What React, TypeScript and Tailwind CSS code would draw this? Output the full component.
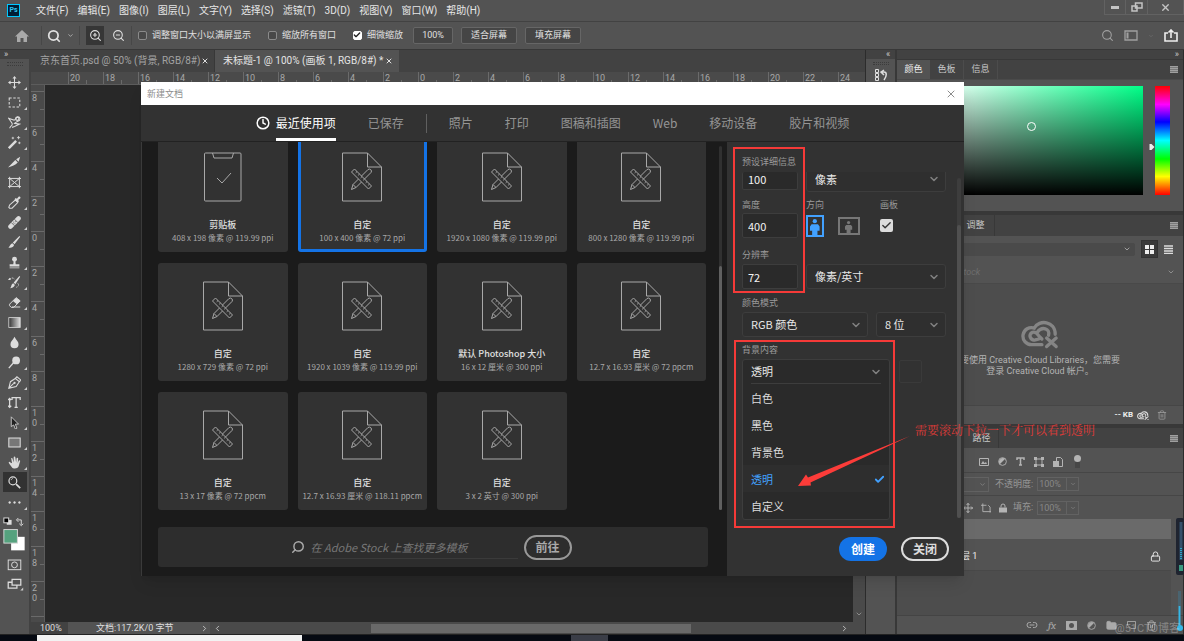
import type { ReactNode } from "react"
import clsx from "clsx"
import { ChevronDown, ChevronUp, ChevronLeft, ChevronRight, Check, X, Search, Clock, Trash2, Lock, Folder, Link2, ZoomIn, ZoomOut } from "lucide-react"

const menus = ["文件(F)", "编辑(E)", "图像(I)", "图层(L)", "文字(Y)", "选择(S)", "滤镜(T)", "3D(D)", "视图(V)", "窗口(W)", "帮助(H)"]

const rulerX = [20, 18, 16, 14, 12, 10, 8, 6, 4, 2, 0, 2, 4, 6, 8, 10, 12, 14, 16, 18, 20, 22]
const rulerY = [8, 6, 4, 2, 0, 2, 4, 6, 8, 10, 12, 14, 16, 18, 20]

const presets = [
  { title: "剪贴板", size: "408 x 198 像素 @ 119.99 ppi", clipboard: true },
  { title: "自定", size: "100 x 400 像素 @ 72 ppi", selected: true },
  { title: "自定", size: "1920 x 1080 像素 @ 119.99 ppi" },
  { title: "自定", size: "800 x 1280 像素 @ 119.99 ppi" },
  { title: "自定", size: "1280 x 729 像素 @ 72 ppi" },
  { title: "自定", size: "1920 x 1039 像素 @ 119.99 ppi" },
  { title: "默认 Photoshop 大小", size: "16 x 12 厘米 @ 300 ppi" },
  { title: "自定", size: "12.7 x 16.93 厘米 @ 72 ppcm" },
  { title: "自定", size: "13 x 17 像素 @ 72 ppcm" },
  { title: "自定", size: "12.7 x 16.93 厘米 @ 118.11 ppcm" },
  { title: "自定", size: "3 x 2 英寸 @ 300 ppi" },
]

const categories = ["照片", "打印", "图稿和插图", "Web", "移动设备", "胶片和视频"]
const backgrounds = ["白色", "黑色", "背景色", "透明", "自定义"]

const s = { fill: "none", stroke: "currentColor" }

const tools: { name: string; icon: ReactNode; plain?: boolean; active?: boolean }[] = [
  { name: "move", icon: <><path d="M8 2v12M2 8h12" {...s} strokeWidth="1.3" /><path d="M8 0 5.5 3.2h5zM8 16l2.5-3.2h-5zM0 8l3.2-2.5v5zM16 8l-3.2-2.5v5z" fill="currentColor" /></> },
  { name: "marquee", icon: <rect x="1.5" y="2.5" width="13" height="11" {...s} strokeWidth="1.3" strokeDasharray="3 2" /> },
  { name: "lasso", icon: <><path d="M2 15c2-4 4-3 3-6L1 3l6 2c2 1 2-3 5-4 3 0 4 4 1 5-2 1-3 1-5 3l6 1-6 3-3 1" {...s} strokeWidth="1.3" /><circle cx="11.5" cy="3.5" r="2" {...s} strokeWidth="1.5" /></> },
  { name: "wand", icon: <><path d="M1 15 10 6" {...s} strokeWidth="3" /><path d="M6 1v3M4.500 2.500h3M13 0v4M11 2h4M14 7v3M12.500 8.500h3" {...s} /></> },
  { name: "slice", icon: <path d="M0 14 9 5l3 3c-3 3-7 5-12 6zM10 4l5-3-2 6z" fill="currentColor" /> },
  { name: "frame", plain: true, icon: <path d="M2 1v14M14 1v14M0 3h16M0 13h16M2 3l12 10M14 3 2 13" {...s} strokeWidth="1.2" /> },
  { name: "eyedropper", icon: <><path d="m9 5 3 3-7 7H2l-1-1 1-3z" {...s} strokeWidth="1.3" /><path d="M8 4 9.500 2.500l1.500 1L13 1c2-1 3 1 2 2l-2.500 2 1 1.500L12 8z" fill="currentColor" /></> },
  { name: "heal", icon: <><path d="m3 13 10-10" {...s} strokeWidth="5.500" strokeLinecap="round" /><path d="m4 8 4 4M8 4l4 4" stroke="#535353" strokeWidth="1" /><path d="M6.500 8.500h1M8.500 7h1M8 9.500h1M7 7h.5" stroke="#535353" /></> },
  { name: "brush", icon: <path d="M15 1 8 10 6 8 14 0zM5.500 9l2 2c-1 3-4 4-7 3 2-1 2-4 5-5z" fill="currentColor" /> },
  { name: "stamp", icon: <><circle cx="8" cy="4" r="3" fill="currentColor" /><path d="M7 6h2l.5 4H14v3H2v-3h4.500zM2 14h12v1H2z" fill="currentColor" /></> },
  { name: "history", icon: <><path d="M15 1 9 10 7 8 14 0zM6.500 9l2 2c-1 3-4 4-6 4 2-1 1-5 4-6zM0 5l2-3 1.500 3z" fill="currentColor" /><path d="M2 4c2-2 5-2 6 0M12 9c2 2 1 4-2 5" {...s} strokeDasharray="2 1" /></> },
  { name: "eraser", icon: <><path d="m2 10 8-8 5 4-8 8H4l-2-2z" {...s} strokeWidth="1.2" /><path d="m6 6 4-4 5 4-4 4zM5 13h10v1.200H5z" fill="currentColor" /></> },
  { name: "gradient", icon: <><defs><linearGradient id="toolGradient"><stop stopColor="#333" /><stop offset="1" stopColor="#ddd" /></linearGradient></defs><rect x="1" y="2" width="14" height="12" fill="url(#toolGradient)" stroke="currentColor" /></> },
  { name: "blur", icon: <path d="M8 1c2 4 5 6 5 9a5 5 0 0 1-10 0c0-3 3-5 5-9z" fill="currentColor" /> },
  { name: "dodge", icon: <><circle cx="10" cy="5.500" r="4.800" fill="currentColor" /><path d="M7 8 1 15" {...s} strokeWidth="1.600" /></> },
  { name: "pen", icon: <><path d="M1 15 3 7l6-4 5 4-4 6zM9 3l2-2 5 4-2 2zM1 15l6-6" {...s} strokeWidth="1.300" /><circle cx="8" cy="8.500" r="1.400" fill="currentColor" /></> },
  { name: "type", icon: <path d="M5 5V2h10v3M10 2v12M8 14h4M2 4v9M0 5l2-2 2 2M0 12l2 2 2-2" {...s} strokeWidth="1.500" /> },
  { name: "path select", icon: <path d="m4 1 9 9H9l2 5-2 1-2-5-3 2z" fill="#222" stroke="currentColor" /> },
  { name: "rectangle", icon: <rect x="1" y="2.500" width="14" height="11" fill="#777" stroke="currentColor" strokeWidth="1.300" /> },
  { name: "hand", icon: <path d="M3 8C1 6 0 8 2 10l3 4c1 2 7 2 8-1l2-7c0-1-2-1-2 0l-1 3 .5-6c0-1-2-1-2 0L10 8 9 1.500c0-1-2-1-2 0L7 8 5.500 3c-.5-1-2-.5-1.500.5L5 9z" fill="currentColor" /> },
  { name: "zoom", active: true, plain: true, icon: <><circle cx="6" cy="6" r="4.800" {...s} strokeWidth="1.500" /><path d="m10 10 5 5" {...s} strokeWidth="2" /><path d="M4 5c0-1 1-2 2-2" {...s} /></> },
  { name: "more", icon: <path d="M2 6.500a1.500 1.500 0 1 0 .1 0zM8 6.500a1.500 1.500 0 1 0 .1 0zM14 6.500a1.500 1.500 0 1 0 .1 0z" fill="currentColor" /> },
]

function Toolbar() {
  return (
    <aside className="flex w-[31px] shrink-0 flex-col border-r-2 border-[#424242] bg-[#535353]">
      <div className="h-[9px] bg-[#424242] pl-1 text-[9px] leading-[8px] text-[#ccc]">»</div>
      <div className="mx-auto mt-[3px] mb-[6px] h-1 w-4 border-y border-dotted border-[#3c3c3c]" />
      {tools.map((tool) => (
        <button
          key={tool.name}
          aria-label={tool.name}
          className={clsx("relative mx-auto flex h-5 w-6 items-center justify-center text-[#dcdcdc]", tool.active && "bg-[#323232]")}
        >
          <svg viewBox="0 0 16 16" className="h-[13px] w-[13px]">{tool.icon}</svg>
          {!tool.plain && (
            <svg viewBox="0 0 3 3" className="absolute right-0 bottom-[2px] h-[3px] w-[3px]"><path d="M3 0v3H0z" fill="#ccc" /></svg>
          )}
        </button>
      ))}
      <svg viewBox="0 0 30 82" className="mt-[5px] w-[29px] text-[#dcdcdc]">
        <rect x="7" y="3" width="5" height="5" fill="#ddd" />
        <rect x="4" y="1" width="5" height="5" fill="#000" stroke="#ddd" />
        <path d="M18 3h4v5M19 1l-2 2 2 2M20 7l2 2 2-2" {...s} />
        <rect x="11.500" y="20.500" width="14" height="14" fill="#fff" />
        <rect x="4" y="13" width="14" height="14" fill="#55a27e" stroke="#d5d5d5" />
        <rect x="8.500" y="44.500" width="13" height="10" {...s} />
        <circle cx="15" cy="49.500" r="3" {...s} />
        <path d="M12.500 64.500h9v6h-9zM12 67.500H8.500v6h9V71" {...s} strokeWidth="1.300" />
        <path d="M24 73v3h-3z" fill="#ccc" />
      </svg>
    </aside>
  )
}

function MenuBar() {
  return (
    <header className="flex h-[22px] items-center border-b border-[#424242] pl-[7px] text-[10px] leading-none text-[#e6e6e6]">
      <span className="mr-4 flex h-[13px] w-[13px] items-center justify-center border border-[#00c8ff] bg-[#001d33] text-[7px] font-bold text-[#31c5f0]">Ps</span>
      <nav className="flex gap-[9px]">
        {menus.map((m) => <button key={m}>{m}</button>)}
      </nav>
      <div className="ml-auto flex h-full items-start text-[#c4c4c4]">
        <button aria-label="minimize" className="flex h-[15px] w-[22px] items-center justify-center border border-t-0 border-[#626262]"><span className="h-[3px] w-2 bg-[#c4c4c4]" /></button>
        <button aria-label="restore" className="flex h-[15px] w-[21px] items-center justify-center border-b border-[#626262]">
          <svg viewBox="0 0 12 10" className="w-3"><path d="M4.500 1h6.500v5H4.500zM1 4h5v5H1z" fill="#535353" stroke="currentColor" strokeWidth="1.500" /></svg>
        </button>
        <button aria-label="close" className="flex h-[15px] w-[37px] items-center justify-center border border-t-0 border-[#626262]"><X size={11} strokeWidth={3} /></button>
      </div>
    </header>
  )
}

function Tick({ label, checked }: { label: string; checked?: boolean }) {
  return (
    <label className="flex items-center gap-[5px]">
      <span className="relative flex h-[9px] w-[9px]">
        <input type="checkbox" defaultChecked={checked} className={clsx("h-[9px] w-[9px] appearance-none rounded-[2px] border", checked ? "border-white bg-white" : "border-[#8a8a8a] bg-[#484848]")} />
        {checked && <Check size={8} strokeWidth={4} className="absolute text-[#222]" />}
      </span>
      {label}
    </label>
  )
}

function OptionsBar() {
  return (
    <div className="flex h-7 items-center border-b border-[#383838] text-[9px] leading-none text-[#e0e0e0]">
      <svg viewBox="0 0 14 12" className="ml-[15px] w-[14px] text-[#a9a9a9]"><path d="M7 0 14 6.500h-2V12H8.500V8h-3v4H2V6.500H0z" fill="currentColor" /></svg>
      <div className="ml-3 flex h-[19px] items-center gap-[6px] border-x border-[#474747] px-[5px]">
        <Search size={14} strokeWidth={3} />
        <ChevronDown size={7} />
      </div>
      <button aria-label="zoom in" className="ml-[6px] flex h-[19px] w-[18px] items-center justify-center bg-[#363636]"><ZoomIn size={13} /></button>
      <button aria-label="zoom out" className="ml-[5px] flex h-[19px] w-[18px] items-center justify-center"><ZoomOut size={13} /></button>
      <div className="ml-1 flex h-[19px] items-center gap-[17px] border-l border-[#474747] pl-[6px]">
        <Tick label="调整窗口大小以满屏显示" />
        <Tick label="缩放所有窗口" />
        <Tick label="细微缩放" checked />
      </div>
      <div className="ml-[10px] flex gap-2">
        <button className="h-[17px] w-10 rounded-[2px] border border-[#666] bg-[#454545]">100%</button>
        <button className="h-[17px] w-14 rounded-[2px] border border-[#666] bg-[#454545]">适合屏幕</button>
        <button className="h-[17px] w-14 rounded-[2px] border border-[#666] bg-[#454545]">填充屏幕</button>
      </div>
      <div className="mr-[6px] ml-auto flex items-center gap-[10px] text-[#a0a0a0]">
        <Search size={13} />
        <svg viewBox="0 0 14 11" className="w-[14px]"><path d="M1 1h12v9H1z" {...s} strokeWidth="1.300" /><path d="M2.500 2.500h2v6h-2z" fill="currentColor" /></svg>
        <ChevronDown size={6} className="text-[#777]" />
        <svg viewBox="0 0 14 13" className="w-[14px] text-[#eee]"><path d="M4 4H1v8h12V4h-3M7 9V1M4.500 3.500 7 1l2.500 2.500" {...s} strokeWidth="1.600" /></svg>
      </div>
    </div>
  )
}

function DocumentArea() {
  return (
    <section className="flex min-w-0 flex-1 flex-col bg-[#282828]">
      <div className="flex h-[22px] bg-[#424242] text-[10px] leading-none">
        <div className="flex w-[184px] items-center justify-between border-r border-[#383838] pr-[7px] pl-[9px] whitespace-nowrap text-[#a2a2a2]">京东首页.psd @ 50% (背景, RGB/8#)<X size={8} strokeWidth={3} className="shrink-0 text-[#ddd]" /></div>
        <div className="flex w-[184px] items-center justify-between bg-[#535353] pr-[6px] pl-2 whitespace-nowrap text-[#e4e4e4]">未标题-1 @ 100% (画板 1, RGB/8#) *<X size={8} strokeWidth={3} className="shrink-0" /></div>
      </div>
      <div className="flex h-[13px] overflow-hidden border-b border-[#5c5c5c] bg-[#4a4a4a] text-[9px] leading-[13px] text-[#a8a8a8]">
        <div className="w-[37px] shrink-0" />
        {rulerX.map((n, i) => (
          <div key={i} className="relative w-[35px] shrink-0 border-l border-[#6a6a6a] pl-px">
            {n}<span className="absolute bottom-0 left-[17px] h-1 w-px bg-[#6a6a6a]" />
          </div>
        ))}
        <div className="w-9 shrink-0 border-l border-[#6a6a6a] pl-px">24</div>
      </div>
      <div className="flex min-h-0 flex-1">
        <div className="w-[14px] shrink-0 overflow-hidden border-r border-[#5c5c5c] bg-[#4a4a4a] pt-[6px] text-[9px] leading-[10px] text-[#a8a8a8]">
          {rulerY.map((n, i) => (
            <div key={i} className="relative h-[35px] border-t border-[#6a6a6a] pt-px pl-px">
              {String(n).split("").map((d, j) => <div key={j}>{d}</div>)}
              <span className="absolute top-[17px] right-0 h-px w-1 bg-[#6a6a6a]" />
            </div>
          ))}
          <div className="border-t border-[#6a6a6a]" />
        </div>
        <div className="flex-1" />
        <div className="flex w-3 flex-col justify-between bg-[#4a4a4a] pb-1 text-[#aaa]">
          <ChevronUp size={8} className="mx-auto" />
          <ChevronDown size={8} className="mx-auto" />
        </div>
      </div>
      <footer className="flex h-3 items-center bg-[#4a4a4a] text-[9px] leading-none text-[#dedede]">
        <span className="h-3 w-[37px] bg-[#424242] pl-[9px] leading-3">100%</span>
        <span className="flex h-3 w-[142px] items-center justify-between bg-[#535353] pr-px pl-7">文档:117.2K/0 字节<ChevronRight size={9} /></span>
        <ChevronLeft size={9} className="mr-[149px] ml-[3px]" />
        <div className="h-[9px] w-[320px] bg-[#696969]" />
        <ChevronRight size={9} className="mr-4 ml-auto" />
      </footer>
    </section>
  )
}

function MenuLines() {
  return <svg viewBox="0 0 8 7" className="mr-[5px] ml-auto w-2 text-[#a0a0a0]"><path d="M0 0h8v7H0z" fill="#7a7a7a" /><path d="M0 .5h8M0 2.500h8M0 4.500h8M0 6.500h8" {...s} /></svg>
}

function CloudLogo({ className }: { className?: string }) {
  return (
    <svg viewBox="0 0 40 30" className={className} fill="none" stroke="currentColor" strokeWidth="3.500" strokeLinecap="round">
      <path d="M22 26H11A9 9 0 1 1 14 8.500C19-1 36 1 36 15" />
      <path d="M19 20l-4 1c-5 1-8-6-3-8 3-1 5 1 7 4l3 3M17 13c5-7 14-4 12 3" />
      <path d="m27 19 10 9M37 19l-10 9" />
    </svg>
  )
}

function Panels() {
  return (
    <aside className="flex w-[319px] shrink-0 border-r border-l border-[#2c2c2c] bg-[#424242] text-[9px] leading-none text-[#c8c8c8]">
      <div className="flex w-[31px] flex-col border-r-2 border-[#383838] bg-[#535353]">
        <div className="h-[9px] bg-[#424242] pl-5 leading-[8px]">«</div>
        <div className="mx-auto mt-[3px] h-[3px] w-4 border-y border-dotted border-[#3c3c3c]" />
        <svg viewBox="0 0 14 12" className="mt-1 ml-2 w-[14px] text-[#ddd]"><path d="M1.500.5h3v3h-3zM1.500 4.500h3v3h-3zM1.500 8.500h3v3h-3z" {...s} /><path d="M8 3h2c3 0 3 4 0 8M10 1 7 3l3 3" {...s} strokeWidth="1.500" /></svg>
      </div>
      <div className="flex min-w-0 flex-1 flex-col bg-[#535353]">
        <div className="h-[9px] bg-[#424242] pr-1 text-right leading-[8px]">»</div>
        <div className="flex h-[21px] items-center border-t border-b border-t-[#383838] border-b-[#4a4a4a] bg-[#424242]">
          <span className="flex h-full w-[33px] items-center justify-center bg-[#535353] text-[#eee]">颜色</span>
          <span className="flex h-full w-[34px] items-center justify-center border-r border-[#4c4c4c]">色板</span>
          <span className="flex h-full w-[34px] items-center justify-center border-r border-[#4c4c4c]">信息</span>
          <MenuLines />
        </div>
        <div className="flex h-[131px] pt-[6px] pr-[13px]">
          <div className="relative ml-2 h-[109px] flex-1 bg-[linear-gradient(to_top,#000,transparent),linear-gradient(to_right,#fff_10%,#00ff88)]">
            <span className="absolute top-9 left-[122px] h-[9px] w-[9px] rounded-full border border-white" />
          </div>
          <svg viewBox="0 0 5 6" className="mt-[58px] ml-[6px] h-[6px] w-[6px]"><path d="M0 0h2l3 3-3 3H0z" fill="#eee" /></svg>
          <div className="h-[109px] w-[15px] bg-[linear-gradient(#f00,#f0f_17%,#00f_33%,#0ff_50%,#0f0_67%,#ff0_83%,#f00)]" />
        </div>
        <div className="flex h-[25px] items-center border-t-4 border-[#383838] bg-[#424242]">
          <span className="ml-[60px] flex h-full w-[38px] items-center justify-center border-r border-[#383838]">调整</span>
          <MenuLines />
        </div>
        <div className="flex h-[26px] items-center pr-[10px] pl-2">
          <div className="flex h-[13px] flex-1 items-center justify-end rounded-[2px] bg-[#4a4a4a] pr-1"><ChevronDown size={8} /></div>
          <span className="mx-[6px] flex h-[18px] w-[17px] items-center justify-center border border-[#333] bg-[#3a3a3a]"><svg viewBox="0 0 9 9" className="w-[9px]"><path d="M0 0h4v4H0zM5 0h4v4H5zM0 5h4v4H0zM5 5h4v4H5z" fill="#eee" /></svg></span>
          <svg viewBox="0 0 9 9" className="w-[9px]"><path d="M0 1h9M0 3.500h9M0 6h9M0 8.500h9" stroke="#ddd" strokeWidth="1.500" /></svg>
        </div>
        <div className="flex h-[22px] items-center border-b border-[#494949] pr-2 pb-[2px] pl-[34px] text-[#777]">
          <input aria-label="Adobe Stock" placeholder="Adobe Stock" className="w-24 bg-transparent italic outline-none placeholder:text-[#6e6e6e]" />
          <ChevronDown size={8} className="ml-auto text-[#aaa]" />
        </div>
        <div className="flex h-[121px] flex-col items-center bg-[#4d4d4d] pt-9 text-center leading-[11px] text-[#b4b4b4]">
          <CloudLogo className="mb-[6px] w-[38px] text-[#858585]" />
          <p>要使用 Creative Cloud Libraries，您需要<br />登录 Creative Cloud 帐户。</p>
        </div>
        <div className="flex h-[19px] items-center justify-end gap-2 border-t border-[#464646] pr-4">
          <b className="-mr-1 text-[8px] text-[#eee]">-- KB</b>
          <CloudLogo className="w-3 text-[#ddd]" />
          <Trash2 size={10} className="text-[#999]" />
        </div>
        <div className="flex h-6 items-center border-t-4 border-[#383838] bg-[#424242]">
          <span className="ml-[68px] flex h-full w-[34px] items-center justify-center border-r border-[#383838]">路径</span>
          <MenuLines />
        </div>
        <div className="flex h-[25px] items-center gap-[9px] border-b border-[#464646] pt-[3px] pl-[82px] text-[#b4b4b4]">
          <svg viewBox="0 0 10 8" className="w-[10px]"><path d="M.5.5h9v7h-9z" {...s} /><path d="M2 6l2-3 1.500 2L7 4l1 2z" fill="currentColor" /></svg>
          <svg viewBox="0 0 10 10" className="w-[9px]"><circle cx="5" cy="5" r="4.300" {...s} /><path d="M2 8 8 2a4.300 4.300 0 0 0-6 6z" fill="currentColor" /></svg>
          <svg viewBox="0 0 9 9" className="w-[9px]"><path d="M1 3V1h7v2M4.500 1v7M3 8h3" {...s} strokeWidth="1.500" /></svg>
          <svg viewBox="0 0 10 10" className="w-[10px]"><path d="M2 2h6v6H2z" {...s} /><path d="M0 0h3v3H0zM7 0h3v3H7zM0 7h3v3H0zM7 7h3v3H7z" fill="currentColor" /></svg>
          <svg viewBox="0 0 10 10" className="w-[10px]"><path d="M3.500 4V.5h4l2 2v7H6" {...s} /><path d="M0 4h6v6H0z" fill="currentColor" /></svg>
          <svg viewBox="0 0 7 13" className="ml-[2px] w-[7px]"><path d="M1 6h5v7H1z" fill="#464646" /><circle cx="3.500" cy="3.500" r="3.500" fill="currentColor" /></svg>
        </div>
        <div className="flex h-[23px] items-center border-b border-[#464646] text-[#969696]">
          <div className="flex h-[15px] w-[92px] items-center justify-end border border-[#626262] pr-[2px]"><ChevronDown size={7} /></div>
          <LayerField id="opacity" label="不透明度:" />
        </div>
        <div className="flex h-[23px] items-center pl-[66px] text-[#969696]">
          <div className="flex gap-2 text-[#b4b4b4]">
            <svg viewBox="0 0 10 10" className="w-[10px]"><path d="M5 0v10M0 5h10M3.500 2 5 .5 6.500 2M3.500 8 5 9.500 6.500 8M2 3.500.5 5 2 6.500M8 3.500 9.500 5 8 6.500" {...s} /></svg>
            <svg viewBox="0 0 11 10" className="w-[10px]"><path d="M2 0v9h9M0 2h6M8 2l2 2v6" {...s} /></svg>
            <svg viewBox="0 0 8 9" className="w-2"><path d="M0 4h8v5H0z" fill="currentColor" /><path d="M2 4V2.500a2 2 0 0 1 4 0V4" {...s} /></svg>
          </div>
          <LayerField id="fill" label="填充:" />
        </div>
        <div className="mr-3 h-5 bg-[#6a6a6a]" />
        <div className="mr-3 flex h-8 items-center border-b border-[#484848] pt-1 pl-[64px] text-[#eee]">层 1<Lock size={11} className="mr-[10px] ml-auto" /></div>
        <div className="mr-3 flex-1 bg-[#4d4d4d]" />
        <div className="flex h-[19px] items-center gap-[10px] border-t border-[#444] pl-[129px] text-[#aaa]">
          <Link2 size={12} />
          <i className="font-serif text-[11px]">fx</i>
          <svg viewBox="0 0 11 9" className="w-[11px]"><path d="M0 0h11v9H0z" fill="currentColor" /><circle cx="5.500" cy="4.500" r="2.500" fill="#535353" /></svg>
          <svg viewBox="0 0 10 10" className="w-[9px]"><circle cx="5" cy="5" r="4.300" {...s} /><path d="M2 8 8 2a4.300 4.300 0 0 0-6 6z" fill="currentColor" /></svg>
          <Folder size={11} fill="currentColor" />
          <svg viewBox="0 0 10 9" className="w-[9px]"><path d="M.5.5h9v8h-5l-4-4z" {...s} /></svg>
          <Trash2 size={11} />
        </div>
      </div>
    </aside>
  )
}

function LayerField({ id, label }: { id: string; label: string }) {
  return (
    <div className="ml-[6px] flex items-center">
      <label htmlFor={id} className="mr-1">{label}</label>
      <input id={id} defaultValue="100%" className="h-[14px] w-[30px] border border-[#626262] bg-transparent pl-px text-[9px] text-[#888]" />
      <span className="flex h-[14px] w-3 items-center justify-center border border-l-0 border-[#626262]"><ChevronDown size={6} /></span>
    </div>
  )
}

function PresetIcon({ clipboard }: { clipboard?: boolean }) {
  if (clipboard) {
    return (
      <svg viewBox="0 0 40 50" className="h-[50px] w-10 text-[#a8a8a8]" {...s}>
        <rect x="1.500" y="1" width="36.500" height="48" rx="1" />
        <path d="M9.500 1l1.500 5h18l1.500-5M14 26l5 5 9-10" />
      </svg>
    )
  }
  return (
    <svg viewBox="0 0 40 50" className="h-[50px] w-10 text-[#a8a8a8]" {...s}>
      <path d="M.5 1h25L39.500 15v34H.500zM25.500 1v14h14" />
      <path d="m9.500 37.500 1.500-5 15-15q1.500-1 2.800.2t.2 2.800l-15 15zM11 32.500l3 3" />
      <path d="m9.500 20 3-3 17 17-3 3z" fill="#323232" />
      <path d="m15 19.500-1.300 1.300M17.500 22l-1.300 1.300M20 24.500l-1.300 1.300M22.500 27l-1.300 1.300M25 29.500l-1.300 1.300M27.500 32l-1.300 1.300" />
    </svg>
  )
}

function Field({ id, label, value, className }: { id: string; label: string; value: string; className?: string }) {
  return (
    <input id={id} aria-label={label} defaultValue={value} className={clsx("w-14 rounded-[2px] border border-[#3d3d3d] bg-[#2a2a2a] pl-[5px] text-[11px] text-[#f2f2f2]", className)} />
  )
}

function Select({ label, value, className }: { label: string; value: string; className?: string }) {
  return (
    <div className={clsx("relative", className)}>
      <select aria-label={label} className="h-full w-full appearance-none rounded-[3px] border border-[#3d3d3d] bg-[#2f2f2f] pl-2 text-[11px] text-[#e8e8e8]">
        <option>{value}</option>
      </select>
      <ChevronDown size={12} strokeWidth={3} className="pointer-events-none absolute inset-y-0 right-[6px] my-auto text-[#808080]" />
    </div>
  )
}

function PersonIcon() {
  return <svg viewBox="0 0 9 15" className="h-full"><circle cx="4.500" cy="2" r="2" fill="currentColor" /><path d="M1.500 5h6L9 7v4H7v4H2v-4H0V7z" fill="currentColor" /></svg>
}

function Details() {
  return (
    <form className="relative flex w-[237px] shrink-0 flex-col bg-[#323232] pt-[13px] pr-[18px] pl-[15px] text-[9px] text-[#9a9a9a]">
      <label htmlFor="doc-width" className="h-[17px] leading-[14px]">预设详细信息</label>
      <div className="flex h-5 justify-between">
        <Field id="doc-width" label="宽度" value="100" className="h-[18px] border-t-0 pb-1" />
        <Select label="单位" value="像素" className="-mt-[6px] h-[26px] w-[140px] [clip-path:inset(6px_0_0_0)]" />
      </div>
      <div className="mt-[5px] flex h-4 items-center">
        <label htmlFor="doc-height" className="w-16">高度</label>
        <span className="w-[74px]">方向</span>
        <label htmlFor="artboard">画板</label>
      </div>
      <div className="flex h-[25px] items-center">
        <Field id="doc-height" label="高度" value="400" className="h-[25px]" />
        <button type="button" aria-label="portrait" className="ml-2 flex h-[22px] w-[18px] justify-center border-2 border-[#42a1ff] pt-[2px] text-[#42a1ff]"><PersonIcon /></button>
        <button type="button" aria-label="landscape" className="ml-[14px] flex h-[18px] w-[22px] justify-center border-2 border-[#777] pt-[2px] text-[#777]"><PersonIcon /></button>
        <span className="relative ml-5 h-[13px] w-[13px]">
          <input id="artboard" type="checkbox" defaultChecked className="block h-[13px] w-[13px] appearance-none rounded-[2px] bg-[#dcdcdc]" />
          <Check size={11} strokeWidth={3} className="pointer-events-none absolute top-px left-px text-[#333]" />
        </span>
      </div>
      <label htmlFor="doc-resolution" className="mt-2 h-[18px] leading-[18px]">分辨率</label>
      <div className="flex h-[25px] justify-between">
        <Field id="doc-resolution" label="分辨率" value="72" className="h-[25px]" />
        <Select label="分辨率单位" value="像素/英寸" className="w-[140px]" />
      </div>
      <span className="mt-[6px] h-[17px] leading-[15px]">颜色模式</span>
      <div className="flex h-[25px] justify-between">
        <Select label="颜色模式" value="RGB 颜色" className="w-[126px]" />
        <Select label="位深度" value="8 位" className="w-[70px]" />
      </div>
      <span className="mt-[5px] h-[17px] leading-[16px]">背景内容</span>
      <div className="flex gap-[9px]">
        <div className="w-[148px] rounded-[3px] border border-[#3d3d3d] bg-[#2a2a2a] text-[11px] leading-none text-[#dcdcdc]">
          <div className="relative mx-2 h-6 border-b border-[#3d3d3d]">
            <select aria-label="背景内容" className="h-full w-full appearance-none bg-transparent text-[#e8e8e8]"><option>透明</option></select>
            <ChevronDown size={12} strokeWidth={3} className="pointer-events-none absolute top-[6px] -right-px text-[#808080]" />
          </div>
          <ul role="listbox" aria-label="背景内容">
            {backgrounds.map((b) => (
              <li key={b} role="option" aria-selected={b === "透明"} className={clsx("flex h-[27px] items-center justify-between px-2 pt-px", b === "透明" && "bg-[#2e2e2e] text-[#42a1ff]")}>
                {b}
                {b === "透明" && <Check size={11} strokeWidth={4} className="-mr-1" />}
              </li>
            ))}
          </ul>
        </div>
        <div className="mt-px h-[23px] w-[23px] rounded-[2px] border border-[#3a3a3a]" />
      </div>
      <div className="mt-[17px] -mr-[3px] flex justify-end gap-[14px] pb-[15px] text-[12px] leading-none font-bold text-white">
        <button type="button" className="h-6 w-12 rounded-full bg-[#1473e6]">创建</button>
        <button type="button" className="h-6 w-12 rounded-full border-2 border-[#dcdcdc] text-[#dcdcdc]">关闭</button>
      </div>
      <div className="absolute top-9 right-[3px] h-[340px] w-1 rounded bg-[#3d3d3d] pt-[47px]"><div className="h-full rounded bg-[#505050]" /></div>
      <div className="absolute top-[5px] left-[6px] h-[146px] w-[72px] border-2 border-[#f53a38]" />
      <div className="absolute top-[198px] left-[7px] h-[188px] w-[161px] border-2 border-[#f53a38]" />
    </form>
  )
}

function NewDocumentDialog() {
  return (
    <div role="dialog" aria-label="新建文档" className="absolute top-[82px] right-[220px] left-[141px] bg-[#323232] font-['Noto_Sans_CJK_SC',sans-serif] shadow-lg">
      <div className="flex h-[23px] items-center justify-between bg-white pr-[7px] pl-[6px] text-[9px] text-[#8c8c8c]">
        新建文档
        <button aria-label="close dialog"><X size={12} strokeWidth={2} /></button>
      </div>
      <div className="flex h-9 items-center justify-center gap-8 text-[12px] leading-none text-[#959595]">
        <button className="flex h-full items-center gap-[6px] text-white">
          <Clock size={14} strokeWidth={2.500} />
          <span className="flex h-full items-center border-b-[3px] border-white pt-[3px]">最近使用项</span>
        </button>
        <button>已保存</button>
        <span className="-mx-[10px] h-[19px] w-px bg-[#606060]" />
        {categories.map((c) => <button key={c}>{c}</button>)}
      </div>
      <div className="flex border-t border-[#222]">
        <div className="flex min-w-0 flex-1 flex-col border-l border-[#3a3a3a] bg-[#1b1b1b] pb-[9px]">
          <div className="flex justify-between overflow-hidden pr-[5px] pl-4">
            <div className="-mt-2 grid w-[548px] grid-cols-4 gap-x-[10px] gap-y-[11px]">
              {presets.map((p) => (
                <button
                  key={p.title + p.size}
                  className={clsx("flex h-[118px] flex-col items-center rounded-[3px] bg-[#323232] pt-[18px] text-[9px] leading-[13px] whitespace-nowrap text-[#a8a8a8]", p.selected && "shadow-[inset_0_0_0_3px_#1473e6]")}
                >
                  <PresetIcon clipboard={p.clipboard} />
                  <span className="mt-4 font-medium text-[#e0e0e0]">{p.title}</span>
                  <span className="text-[8px]">{p.size}</span>
                </button>
              ))}
            </div>
            <div className="mt-1 flex w-[3px] flex-col rounded bg-[#303030] pt-[120px]"><div className="flex-1 rounded bg-[#606060]" /></div>
          </div>
          <div className="mt-[17px] mr-[19px] ml-4 flex h-10 items-center justify-center rounded-[3px] bg-[#2d2d2d] pr-1 text-[#aaa]">
            <label htmlFor="stock"><Search size={14} strokeWidth={2.500} className="-scale-x-100" /></label>
            <input id="stock" placeholder="在 Adobe Stock 上查找更多模板" className="ml-[5px] h-6 w-[208px] border-b border-[#3a3a3a] bg-transparent pl-px text-[11px] italic placeholder:text-[#777]" />
            <button className="ml-[6px] h-[25px] w-12 rounded-full border-2 border-[#999] text-[12px] leading-none font-bold">前往</button>
          </div>
        </div>
        <Details />
      </div>
    </div>
  )
}

function Annotation() {
  return (
    <>
      <svg viewBox="0 0 112 51" className="pointer-events-none absolute top-[436px] left-[798px] w-[112px]">
        <path d="M112 0 12.500 46.500 13 49.500 0 50 8 38.500l2 3z" fill="#fc3c39" />
      </svg>
      <p className="absolute top-[421px] left-[915px] font-['Noto_Serif_CJK_SC','Noto_Sans_CJK_SC',serif] text-[12px] leading-[18px] whitespace-nowrap text-[#e03b38]">需要滚动下拉一下才可以看到透明</p>
    </>
  )
}

export default function App() {
  return (
    <div className="relative flex h-screen flex-col overflow-hidden bg-[#535353] font-[Roboto,'Noto_Sans_CJK_SC',sans-serif]">
      <MenuBar />
      <OptionsBar />
      <main className="flex min-h-0 flex-1">
        <Toolbar />
        <DocumentArea />
        <Panels />
      </main>
      <div className="flex h-[7px] border-t border-[#222] bg-[#060a12]">
        <div className="ml-[37px] h-full w-[265px] bg-[#f2f2f2]" />
        <div className="ml-[269px] h-full w-[37px] bg-[#3a3d47]" />
      </div>
      <NewDocumentDialog />
      <Annotation />
      <svg viewBox="0 0 8 116" className="absolute top-[518px] right-0 w-2">
        <rect width="8" height="57" rx="2" fill="#1f2430" />
        <path d="M5 4v38" stroke="#35506a" strokeWidth="3" />
        <path d="M5 30v12" stroke="#2aa6c8" strokeWidth="2" strokeDasharray="1 1" />
        <path d="M3 47h4v6H3z" fill="#3a9a80" />
        <path d="M3.500 73v15" stroke="#4a6470" strokeWidth="3" />
        <path d="M3.500 88v22" stroke="#35b8e8" strokeWidth="2" />
        <circle cx="4" cy="110" r="3" fill="#35b8e8" />
      </svg>
      <span className="absolute right-1 bottom-[4px] text-[11px] leading-4 text-white/30">@51CTO博客</span>
    </div>
  )
}
